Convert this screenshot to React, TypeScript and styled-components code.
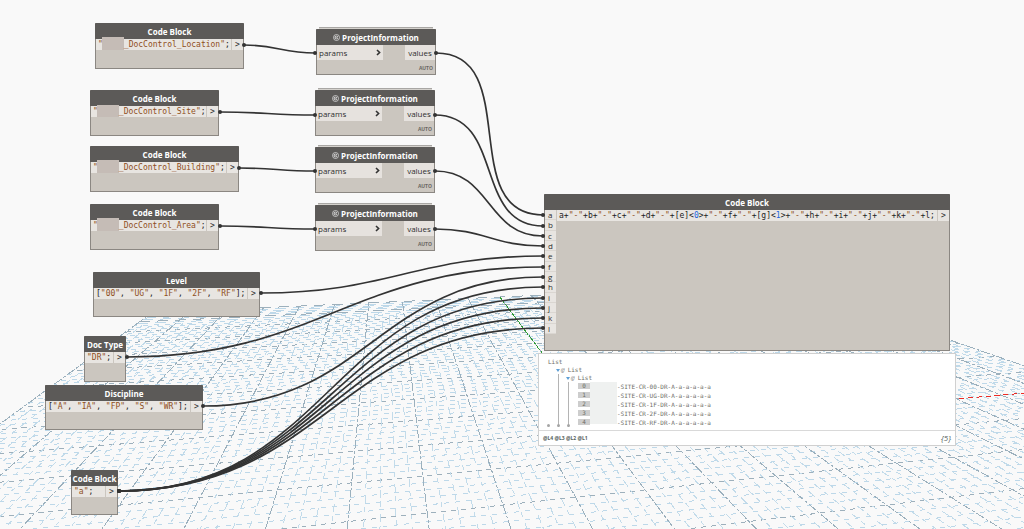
import React from "react";
import styled, { createGlobalStyle } from "styled-components";

const Global = createGlobalStyle`
  * { box-sizing: border-box; }
  body { margin: 0; background: #f9f9f9; }
  button { font: inherit; color: inherit; border: 0; padding: 0; cursor: pointer; }
`;

const sans = `"Open Sans", "Noto Sans", sans-serif`;
const mono = `"DejaVu Sans Mono", "Liberation Mono", monospace`;

const Workspace = styled.main`
  position: relative;
  min-height: 100vh;
  overflow: hidden;
  background: #f9f9f9;
  font-family: ${sans};
  font-size: 8px;
  color: #2f2f2f;
`;

const Layer = styled.svg`
  position: absolute;
  inset: 0;
  width: 100%;
  height: 100%;
  pointer-events: none;
`;

const Node = styled.section<{ $x: number; $y: number; $w: number; $h: number }>`
  position: absolute;
  left: ${(p) => p.$x}px;
  top: ${(p) => p.$y}px;
  width: ${(p) => p.$w}px;
  min-height: ${(p) => p.$h}px;
  display: flex;
  flex-direction: column;
  background: #cbc6bf;
  border: 1px solid #8b8782;
  border-top-color: #5c5a58;
`;

const StackEdge = styled.div`
  position: absolute;
  left: 2px;
  right: 2px;
  top: -3px;
  height: 2px;
  background: #d5d2cd;
  border-top: 1px solid #a9a7a4;
`;

const Title = styled.h2`
  display: flex;
  align-items: center;
  justify-content: center;
  gap: 2px;
  height: 15px;
  margin: 0 -1px;
  background: #5c5a58;
  color: #fff;
  font-size: 8px;
  line-height: 14px;
  font-weight: 700;
  white-space: nowrap;
`;

const CodeRow = styled.div`
  display: flex;
  gap: 1px;
  height: 11px;
`;

const Code = styled.code`
  flex: 1;
  display: flex;
  padding-left: 2px;
  background: #e8e5e1;
  font-family: ${mono};
  font-size: 8px;
  line-height: 11px;
  white-space: pre;
  color: #222;
`;

const Str = styled.span`
  color: #8f4f1c;
`;

const Num = styled.span`
  color: #1c66e0;
`;

const Mask = styled.span<{ $w: number; $h: number }>`
  flex: none;
  width: ${(p) => p.$w}px;
  height: ${(p) => p.$h}px;
  margin-top: ${(p) => 11 - p.$h}px;
  margin-left: -1px;
  background: #c5bcb6;
`;

const OutPort = styled.button`
  width: 11px;
  background: #e8e5e1;
  font-family: ${mono};
  font-size: 8px;
  line-height: 10px;
`;

const PortRow = styled.div`
  display: flex;
  justify-content: space-between;
  height: 15px;
`;

const InPort = styled.button`
  display: flex;
  align-items: center;
  justify-content: space-between;
  width: 66px;
  padding: 0 2px;
  background: #e6e2de;
  line-height: 15px;
`;

const ValuePort = styled.button`
  width: 30px;
  background: #e6e2de;
  line-height: 15px;
`;

const Lacing = styled.div`
  display: flex;
  flex: 1;
  align-items: center;
  justify-content: flex-end;
  padding: 2px 2px 0 0;
  font-size: 5px;
  font-weight: 700;
  color: #6a6663;
`;

const JoinBody = styled.div`
  display: grid;
  grid-template-columns: 11px 1fr;
  column-gap: 1px;
`;

const InputList = styled.div`
  display: grid;
  grid-template-rows: repeat(12, 1fr);
  height: 124px;
`;

const InputPort = styled.button`
  display: flex;
  align-items: center;
  padding-left: 3px;
  background: #e8e5e1;
  border-bottom: 1px solid #dad6d1;
  line-height: 9px;
`;

const Preview = styled.aside`
  position: absolute;
  left: 538px;
  top: 353px;
  width: 418px;
  min-height: 93px;
  display: flex;
  flex-direction: column;
  background: #fff;
  border: 1px solid #d0d0d0;
  font-family: ${mono};
  font-size: 6px;
  line-height: 8px;
  color: #6d6d66;
`;

const Tree = styled.div`
  flex: 1;
  padding: 4px 0 0 9px;
`;

const Branch = styled.div`
  display: flex;
  align-items: center;
  gap: 1px;
  height: 8px;
`;

const Caret = styled.span`
  margin-left: -1px;
  border: 2px solid transparent;
  border-top: 3px solid #5d9fd6;
  border-bottom: 0;
`;

const Level = styled.span`
  margin-right: 2px;
  color: #858585;
  font-style: italic;
`;

const Children = styled.div<{ $guide?: boolean }>`
  position: relative;
  margin-left: ${(p) => (p.$guide ? 1 : 0)}px;
  padding-left: 8px;
  border-left: 1px solid ${(p) => (p.$guide ? "#b4b4b4" : "transparent")};
  &::after {
    content: "";
    position: absolute;
    left: -2px;
    bottom: 0;
    width: 3px;
    height: 3px;
    border-radius: 50%;
    background: #a5a5a5;
  }
`;

const Items = styled.div`
  display: grid;
  grid-template-columns: 12px 27px 1fr;
  padding-left: 1px;
`;

const Indexes = styled.div`
  display: flex;
  flex-direction: column;
`;

const Index = styled.span`
  height: 6px;
  margin: 1px 0 2px;
  background: #cdcdcd;
  line-height: 6px;
  text-align: center;
`;

const HiddenPrefix = styled.div`
  background: #eff1f0;
  margin-bottom: 3px;
`;

const Value = styled.span`
  height: 9px;
  line-height: 9px;
  white-space: pre;
`;

const PreviewFoot = styled.footer`
  display: flex;
  justify-content: space-between;
  align-items: center;
  height: 15px;
  padding: 0 4px;
  border-top: 1px solid #d9d9d9;
  font-family: ${sans};
  color: #56625c;
`;

const Levels = styled.span`
  font-size: 5px;
  font-weight: 700;
`;

const Count = styled.span`
  font-size: 8px;
  font-style: italic;
`;

/* Ground plane: a 100 x 100 unit square projected with two vanishing points. */
const ORIGIN = [600, 430];
const VANISH_U = [3900, 143];
const VANISH_V = [384, 143];

function project(u: number, v: number) {
  const a = u * 0.00346;
  const b = v * 0.01727;
  const w = 1 + a + b;
  return [0, 1].map((i) => (ORIGIN[i] + a * VANISH_U[i] + b * VANISH_V[i]) / w);
}

function GroundLine(p: { from: number[]; to: number[]; color: string; dash: string; offset?: number }) {
  return (
    <line
      x1={p.from[0]}
      y1={p.from[1]}
      x2={p.to[0]}
      y2={p.to[1]}
      stroke={p.color}
      strokeDasharray={p.dash}
      strokeDashoffset={p.offset ?? 0}
    />
  );
}

function Ground() {
  const across: React.ReactNode[] = [];
  const along: React.ReactNode[] = [];
  for (let v = -26; v <= 50; v++) {
    const major = v % 5 === 0;
    const far = v > 43;
    across.push(
      <GroundLine
        key={v}
        from={project(-50, v)}
        to={project(50, v)}
        color={major ? "#9db0bc" : "#bdd8e9"}
        dash={far ? "11 7" : major ? "5 5" : "5 6"}
        offset={far ? 0 : (v + 50) * 7}
      />
    );
  }
  for (let u = -50; u <= 50; u++) {
    const major = u % 5 === 0;
    along.push(
      <GroundLine
        key={u}
        from={project(u, major ? 50 : 43)}
        to={project(u, -40)}
        color={major ? "#9bb0bd" : "#c2dbea"}
        dash={major ? "9 2 3 2" : "8 4 5 7"}
        offset={(u + 50) * 5}
      />
    );
  }
  return (
    <Layer aria-hidden="true" shapeRendering="crispEdges">
      {across}
      {along}
      <GroundLine from={project(0, 50)} to={project(0, 0)} color="#2f9a35" dash="3 1" />
      <GroundLine from={project(0, 0)} to={project(50, 0)} color="#ee2a24" dash="5 4" />
    </Layer>
  );
}

const wires: [number, number, number, number][] = [
  [244, 45, 315, 53],
  [220, 112, 315, 115],
  [239, 168, 315, 171],
  [220, 226, 315, 229],
  [436, 53, 543, 215],
  [435, 115, 543, 226],
  [435, 171, 543, 236],
  [435, 229, 543, 246],
  [261, 293, 543, 256],
  [127, 357, 543, 267],
  [203, 406, 543, 277],
  [119, 491, 543, 287],
  [119, 491, 543, 298],
  [119, 491, 543, 308],
  [119, 491, 543, 318],
  [119, 491, 543, 328],
];

function Wires() {
  return (
    <Layer aria-hidden="true">
      {wires.map(([x1, y1, x2, y2], i) => {
        const reach = Math.hypot(x2 - x1, y2 - y1) * 0.45;
        return (
          <g key={i} fill="#333">
            <path
              d={`M${x1} ${y1} C${x1 + reach} ${y1} ${x2 - reach} ${y2} ${x2} ${y2}`}
              fill="none"
              stroke="#333"
              strokeWidth="1.7"
            />
            <circle cx={x1} cy={y1} r="2" />
            <circle cx={x2} cy={y2} r="2" />
          </g>
        );
      })}
    </Layer>
  );
}

function colorize(source: string) {
  return source.split(/("[^"]*"?|\d(?=>))/).map((part, i) => {
    if (part.startsWith('"')) return <Str key={i}>{part}</Str>;
    if (/^\d$/.test(part)) return <Num key={i}>{part}</Num>;
    return <span key={i}>{part}</span>;
  });
}

interface Block {
  title: string;
  x: number;
  y: number;
  w: number;
  h: number;
  code?: string;
  suffix?: string;
  mask?: [number, number];
}

const blocks: Block[] = [
  { title: "Code Block", x: 95, y: 23, w: 149, h: 46, suffix: "_DocControl_Location", mask: [22, 13] },
  { title: "Code Block", x: 90, y: 90, w: 129, h: 46, suffix: "_DocControl_Site", mask: [22, 12] },
  { title: "Code Block", x: 90, y: 146, w: 149, h: 46, suffix: "_DocControl_Building", mask: [22, 13] },
  { title: "Code Block", x: 90, y: 204, w: 129, h: 46, suffix: "_DocControl_Area", mask: [22, 13] },
  { title: "Level", x: 93, y: 272, w: 167, h: 45, code: '["00", "UG", "1F", "2F", "RF"];' },
  { title: "Doc Type", x: 84, y: 336, w: 42, h: 46, code: '"DR";' },
  { title: "Discipline", x: 45, y: 385, w: 158, h: 45, code: '["A", "IA", "FP", "S", "WR"];' },
  { title: "Code Block", x: 71, y: 470, w: 47, h: 45, code: '"a";' },
];

function CodeBlock({ title, x, y, w, h, code, suffix, mask }: Block) {
  return (
    <Node $x={x} $y={y} $w={w} $h={h}>
      <Title>{title}</Title>
      <CodeRow>
        <Code>
          {mask && (
            <>
              <Str>"</Str>
              <Mask $w={mask[0]} $h={mask[1]} />
              <Str>{suffix}"</Str>;
            </>
          )}
          {code && colorize(code)}
        </Code>
        <OutPort>&gt;</OutPort>
      </CodeRow>
    </Node>
  );
}

const infoNodes = [
  { x: 316, y: 29 },
  { x: 315, y: 90 },
  { x: 315, y: 147 },
  { x: 315, y: 205 },
];

function InfoNode({ x, y }: { x: number; y: number }) {
  return (
    <Node $x={x} $y={y} $w={120} $h={46}>
      <StackEdge />
      <Title>
        <svg width="7" height="7" viewBox="0 0 14 14" fill="none" stroke="#d8d8d8" strokeWidth="1.6">
          <circle cx="7" cy="7" r="6" />
          <path d="M10 5.5 7 4 4 5.5v3L7 10l3-1.5M4 5.5l3 1.8 3-1.8" />
        </svg>
        ProjectInformation
      </Title>
      <PortRow>
        <InPort>
          params
          <svg width="5" height="7" viewBox="0 0 5 7" fill="none" stroke="#333" strokeWidth="1.6">
            <path d="M1 1l2.6 2.5L1 6" />
          </svg>
        </InPort>
        <ValuePort>values</ValuePort>
      </PortRow>
      <Lacing>AUTO</Lacing>
    </Node>
  );
}

const joinCode =
  'a+"-"+b+"-"+c+"-"+d+"-"+[e]<0>+"-"+f+"-"+[g]<1>+"-"+h+"-"+i+"-"+j+"-"+k+"-"+l;';
const results = ["00", "UG", "1F", "2F", "RF"];

export default function App() {
  return (
    <>
      <Global />
      <Workspace>
        <Ground />
        {blocks.map((b) => (
          <CodeBlock key={`${b.x}-${b.y}`} {...b} />
        ))}
        {infoNodes.map((n) => (
          <InfoNode key={n.y} {...n} />
        ))}
        <Node $x={544} $y={194} $w={406} $h={157}>
          <Title>Code Block</Title>
          <JoinBody>
            <InputList>
              {"abcdefghijkl".split("").map((name) => (
                <InputPort key={name}>{name}</InputPort>
              ))}
            </InputList>
            <CodeRow>
              <Code>{colorize(joinCode)}</Code>
              <OutPort>&gt;</OutPort>
            </CodeRow>
          </JoinBody>
        </Node>
        <Preview>
          <Tree>
            <Branch>List</Branch>
            <Children>
              <Branch>
                <Caret />
                <Level>@</Level>List
              </Branch>
              <Children $guide>
                <Branch>
                  <Caret />
                  <Level>@</Level>List
                </Branch>
                <Children $guide>
                  <Items>
                    <Indexes>
                      {results.map((r, i) => (
                        <Index key={r}>{i}</Index>
                      ))}
                    </Indexes>
                    <HiddenPrefix />
                    <Indexes>
                      {results.map((r) => (
                        <Value key={r}>-SITE-CR-{r}-DR-A-a-a-a-a-a</Value>
                      ))}
                    </Indexes>
                  </Items>
                </Children>
              </Children>
            </Children>
          </Tree>
          <PreviewFoot>
            <Levels>@L4 @L3 @L2 @L1</Levels>
            <Count>{"{5}"}</Count>
          </PreviewFoot>
        </Preview>
        <Wires />
      </Workspace>
    </>
  );
}
